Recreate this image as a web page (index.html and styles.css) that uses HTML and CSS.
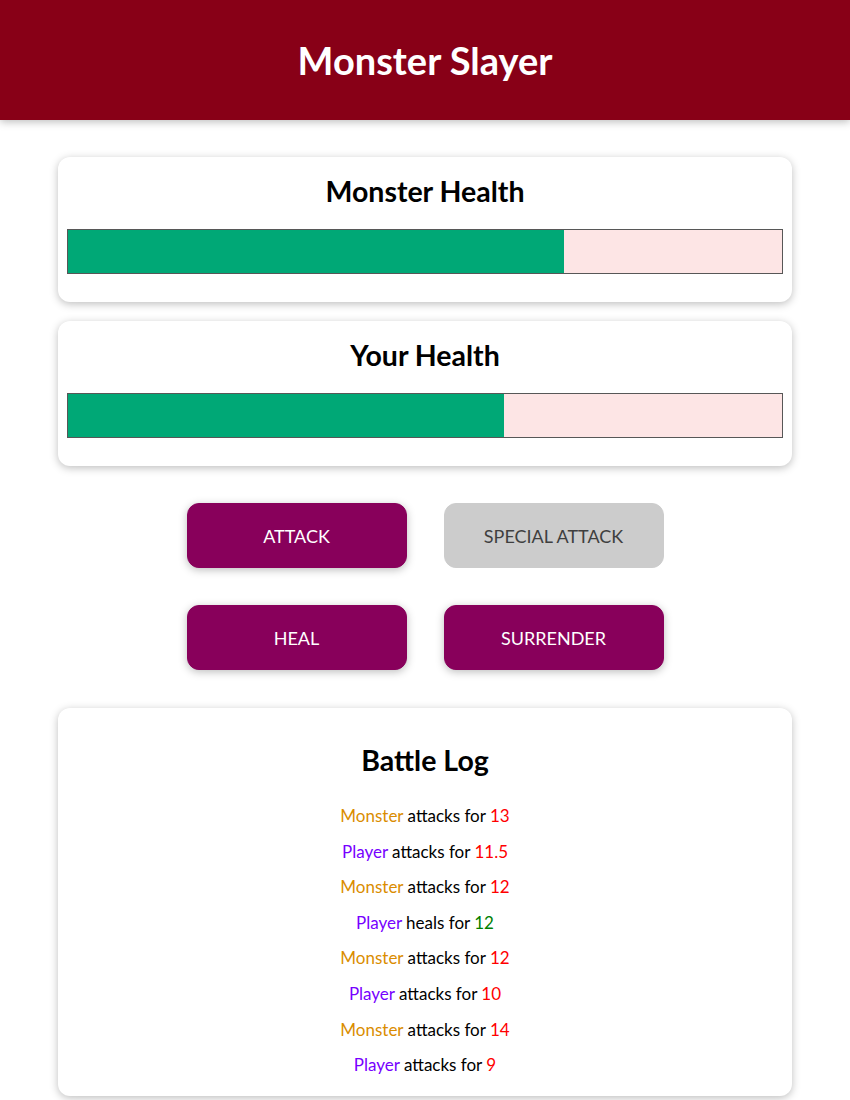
FILE: index.html
```html
<!DOCTYPE html>
<html lang="en">
<head>
<meta charset="utf-8">
<title>Monster Slayer</title>
<link rel="stylesheet" href="styles.css">
</head>
<body>
<header class="header">
  <h1 class="header__title">Monster Slayer</h1>
</header>
<div class="page">
  <section class="card">
    <h2 class="card__title">Monster Health</h2>
    <div class="healthbar"><div class="healthbar__value" style="width: 69.5%"></div></div>
  </section>
  <section class="card">
    <h2 class="card__title">Your Health</h2>
    <div class="healthbar"><div class="healthbar__value" style="width: 61%"></div></div>
  </section>
  <section class="controls">
    <button class="btn">ATTACK</button>
    <button class="btn" disabled>SPECIAL ATTACK</button>
    <button class="btn">HEAL</button>
    <button class="btn">SURRENDER</button>
  </section>
  <section class="card card--log">
    <h2 class="card__title card__title--log">Battle Log</h2>
    <ul class="log">
      <li><span class="log--monster">Monster</span> attacks for <span class="log--damage">13</span></li>
      <li><span class="log--player">Player</span> attacks for <span class="log--damage">11.5</span></li>
      <li><span class="log--monster">Monster</span> attacks for <span class="log--damage">12</span></li>
      <li><span class="log--player">Player</span> heals for <span class="log--heal">12</span></li>
      <li><span class="log--monster">Monster</span> attacks for <span class="log--damage">12</span></li>
      <li><span class="log--player">Player</span> attacks for <span class="log--damage">10</span></li>
      <li><span class="log--monster">Monster</span> attacks for <span class="log--damage">14</span></li>
      <li><span class="log--player">Player</span> attacks for <span class="log--damage">9</span></li>
    </ul>
  </section>
</div>
</body>
</html>
```
FILE: styles.css
```css
* { box-sizing: border-box; }
html { font-family: "Lato", "Open Sans", sans-serif; }
body { margin: 0; background: #fff; color: #000; }

.header {
  height: 120px;
  background-color: #880017;
  color: #fff;
  display: flex;
  align-items: center;
  justify-content: center;
  box-shadow: 0 2px 8px rgba(0, 0, 0, 0.26);
}
.header__title {
  margin: 0;
  font-size: 38px;
  font-weight: 700;
  line-height: 1;
}

.page {
  width: 734px;
  margin: 37px auto 0;
  padding-bottom: 20px;
}

.card {
  background: #fff;
  text-align: center;
  padding: 8px 9px;
  margin-bottom: 19px;
  box-shadow: 0 2px 8px rgba(0, 0, 0, 0.26);
  border-radius: 12px;
}
.card__title {
  margin: 8px 0 0;
  font-size: 28.5px;
  line-height: 36px;
  font-weight: 700;
}
.healthbar {
  height: 45px;
  margin: 20px 0 20px;
  border: 1px solid #575757;
  background: #fde5e5;
}
.healthbar__value {
  height: 100%;
  background-color: #00a876;
}

.controls {
  display: grid;
  grid-template-columns: 220px 220px;
  justify-content: center;
  column-gap: 37px;
  row-gap: 37px;
  padding: 18px 0 38px;
}
.btn {
  font: inherit;
  font-size: 18px;
  height: 65px;
  border: 1px solid #88005b;
  background-color: #88005b;
  color: #fff;
  border-radius: 12px;
  box-shadow: 0 2px 8px rgba(0, 0, 0, 0.26);
  cursor: pointer;
}
.btn:disabled {
  background-color: #ccc;
  border-color: #ccc;
  box-shadow: none;
  color: #3f3f3f;
}

.card--log { padding-bottom: 13px; margin-bottom: 0; }
.card__title--log { margin-top: 26px; }
.log {
  list-style: none;
  margin: 20px 0 0;
  padding: 0;
  font-size: 17px;
}
.log li { line-height: 35.6px; }
.log--player { color: #7700ff; }
.log--monster { color: #da8d00; }
.log--damage { color: red; }
.log--heal { color: green; }
```
